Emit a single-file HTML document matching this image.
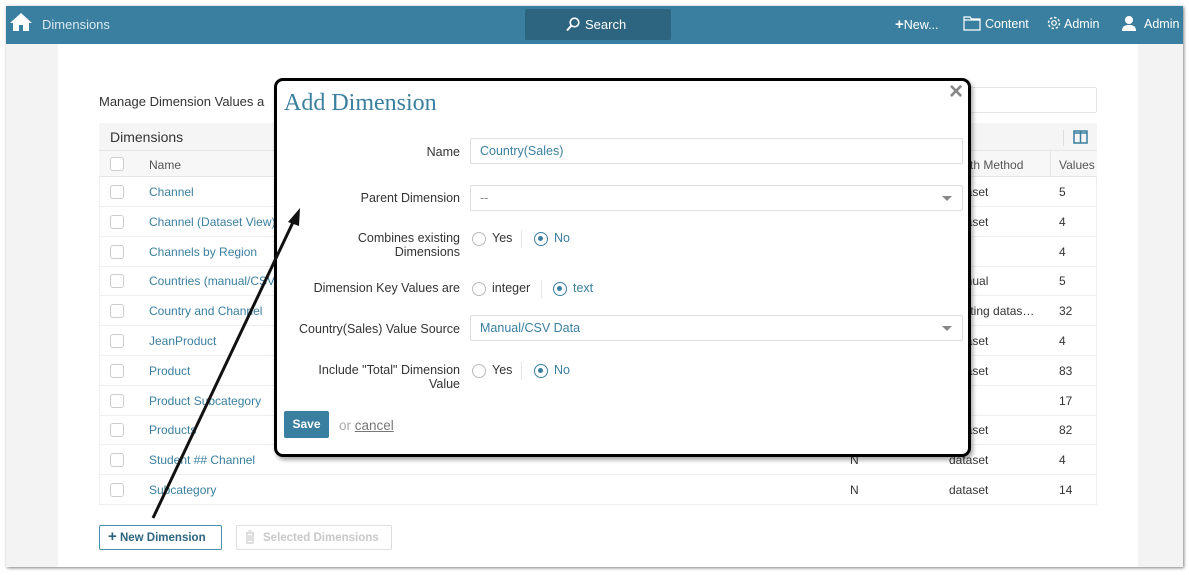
<!DOCTYPE html>
<html><head><meta charset="utf-8"><style>
*{box-sizing:border-box;margin:0;padding:0}
body{width:1189px;height:575px;background:#fff;font-family:"Liberation Sans",sans-serif;font-size:12px;color:#333;position:relative;overflow:hidden}
.a{position:absolute}
.frame{left:6px;top:6px;width:1177px;height:561px;background:#f3f3f3;box-shadow:1px 1px 3px rgba(0,0,0,.5);overflow:hidden}
.hdr{left:0;top:0;width:1177px;height:38px;background:#3a7f9f;color:#fff}
.panel{left:52px;top:38px;width:1080px;height:523px;background:#fff}
.row{left:93px;width:998px;height:30px;border-bottom:1px solid #eceeef}
.cb{width:14px;height:14px;border:1px solid #ccc;border-radius:3px;background:#fff}
.lnk{color:#3a7f9f}
.modal{left:274px;top:78px;width:697px;height:379px;background:#fff;border:3px solid #000;border-radius:9px;box-shadow:2px 3px 4px rgba(0,0,0,.35)}
.lbl{text-align:right;width:183px;left:0;color:#333;font-size:12.5px;line-height:14px}
.inp{left:193px;width:493px;height:26px;border:1px solid #ddd;border-radius:2px;color:#3a7f9f;font-size:12.5px;padding:5px 9px}
.rad{width:14px;height:14px;border:1px solid #bbb;border-radius:50%}
.rs{border:1.5px solid #3a7f9f}
.rs:after{content:"";position:absolute;left:3px;top:3px;width:5px;height:5px;border-radius:50%;background:#3a7f9f}
.caret{right:10px;top:10px;width:0;height:0;border-left:5px solid transparent;border-right:5px solid transparent;border-top:5px solid #888}
</style></head><body>
<div class="a frame">
 <div class="a hdr">
  <svg class="a" style="left:4px;top:6px" width="22" height="20" viewBox="0 0 22 20"><path d="M11 1L0 11h3v8h6v-6h4v6h6v-8h3z" fill="#fff"/></svg>
  <div class="a" style="left:36px;top:11px;font-size:13px;color:#dbe9f0">Dimensions</div>
  <div class="a" style="left:519px;top:3px;width:146px;height:31px;background:#2d6480;border-radius:2px"></div>
  <svg class="a" style="left:560px;top:11px" width="14" height="15" viewBox="0 0 14 15"><circle cx="8.5" cy="5.5" r="4.3" fill="none" stroke="#fff" stroke-width="1.6"/><path d="M5.5 8.5L1 13.5" stroke="#fff" stroke-width="2"/></svg>
  <div class="a" style="left:579px;top:11px;font-size:13px">Search</div>
  <div class="a" style="left:889px;top:10px;font-size:12.5px"><b style="font-size:15px">+</b>New...</div>
  <svg class="a" style="left:957px;top:10px" width="18" height="15" viewBox="0 0 18 15"><path d="M1 1h6l1.5 2H17v11H1z M1 4h16" fill="none" stroke="#fff" stroke-width="1.2"/></svg>
  <div class="a" style="left:979px;top:11px;font-size:12.5px">Content</div>
  <svg class="a" style="left:1040px;top:9px" width="16" height="16" viewBox="0 0 16 16"><circle cx="8" cy="8" r="5.5" fill="none" stroke="#fff" stroke-width="1.4" stroke-dasharray="2.5 1.8"/><circle cx="8" cy="8" r="2.3" fill="none" stroke="#fff" stroke-width="1.2"/></svg>
  <div class="a" style="left:1058px;top:11px;font-size:12.5px">Admin</div>
  <svg class="a" style="left:1115px;top:9px" width="16" height="16" viewBox="0 0 16 16"><circle cx="8" cy="5" r="4" fill="#fff"/><path d="M1 16c0-5 3-6 7-6s7 1 7 6z" fill="#fff"/></svg>
  <div class="a" style="left:1138px;top:11px;font-size:12.5px">Admin</div>
 </div>
 <div class="a panel"></div>
 <div class="a" style="left:93px;top:88px;font-size:13px;color:#333">Manage Dimension Values a</div>
 <div class="a" style="left:960px;top:81px;width:131px;height:26px;border:1px solid #e5e5e5;border-radius:2px"></div>
 <div class="a" style="left:93px;top:117px;width:998px;height:382px;border:1px solid #eceeef"></div>
 <div class="a" style="left:93px;top:117px;width:998px;height:28px;background:#f5f5f5;border-bottom:1px solid #e5e5e5"></div>
 <div class="a" style="left:104px;top:123px;font-size:14px">Dimensions</div>
 <div class="a" style="left:1057px;top:124px;width:1px;height:16px;background:#ddd"></div>
 <svg class="a" style="left:1067px;top:124px" width="15" height="14" viewBox="0 0 15 14"><rect x="1" y="1" width="13" height="12" fill="none" stroke="#3a7f9f" stroke-width="1.5"/><path d="M7.5 1v12M1 3h13" stroke="#3a7f9f" stroke-width="1.5"/></svg>
 <div class="a" style="left:93px;top:145px;width:998px;height:26px;background:#f7f7f7;border-bottom:1px solid #e5e5e5"></div>
 <div class="a cb" style="left:104px;top:151px"></div>
 <div class="a" style="left:143px;top:152px;color:#555">Name</div>
 <div class="a" style="left:964px;top:152px;color:#555">th Method</div>
 <div class="a" style="left:1044px;top:145px;width:1px;height:26px;background:#e5e5e5"></div>
 <div class="a" style="left:1053px;top:152px;color:#555">Values</div>
 <div id="rows"></div>
 <div class="a" style="left:93px;top:519px;width:123px;height:25px;border:1px solid #4a8fae;border-radius:2px;color:#2d6480;font-weight:bold;font-size:11.5px;padding:5px 0 0 8px"><span style="font-size:15px;line-height:11px">+</span> New Dimension</div>
 <div class="a" style="left:230px;top:519px;width:156px;height:25px;border:1px solid #ddd;border-radius:2px;color:#c8c8c8;font-weight:bold;font-size:11.5px;padding:6px 0 0 26px">Selected Dimensions</div>
 <svg class="a" style="left:239px;top:524px" width="10" height="14" viewBox="0 0 10 14"><path d="M1 3h8M3.5 1h3M2 3v10h6V3M4 5v6M6 5v6" fill="none" stroke="#ccc" stroke-width="1.2"/></svg>
</div>
<div class="a modal">
 <div class="a" style="left:7px;top:9px;font-family:'Liberation Serif',serif;font-size:24px;color:#3a7f9f">Add Dimension</div>
 <div class="a" style="left:672px;top:-3px;font-size:24px;color:#888;font-weight:bold">×</div>
 <div class="a lbl" style="top:64px">Name</div>
 <div class="a inp" style="top:57px">Country(Sales)</div>
 <div class="a lbl" style="top:110px">Parent Dimension</div>
 <div class="a inp" style="top:104px;color:#888">--<div class="a caret"></div></div>
 <div class="a lbl" style="top:150px">Combines existing<br>Dimensions</div>
 <div class="a rad" style="left:195px;top:151px"></div><div class="a" style="left:215px;top:150px;font-size:12.5px">Yes</div>
 <div class="a" style="left:244px;top:149px;width:1px;height:18px;background:#e5e5e5"></div>
 <div class="a rad rs" style="left:257px;top:151px"></div><div class="a lnk" style="left:277px;top:150px;font-size:12.5px">No</div>
 <div class="a lbl" style="top:200px">Dimension Key Values are</div>
 <div class="a rad" style="left:195px;top:201px"></div><div class="a" style="left:215px;top:200px;font-size:12.5px">integer</div>
 <div class="a" style="left:264px;top:199px;width:1px;height:18px;background:#e5e5e5"></div>
 <div class="a rad rs" style="left:276px;top:201px"></div><div class="a lnk" style="left:296px;top:200px;font-size:12.5px">text</div>
 <div class="a lbl" style="top:241px">Country(Sales) Value Source</div>
 <div class="a inp" style="top:234px">Manual/CSV Data<div class="a caret"></div></div>
 <div class="a lbl" style="top:282px">Include "Total" Dimension<br>Value</div>
 <div class="a rad" style="left:195px;top:283px"></div><div class="a" style="left:215px;top:282px;font-size:12.5px">Yes</div>
 <div class="a" style="left:244px;top:281px;width:1px;height:18px;background:#e5e5e5"></div>
 <div class="a rad rs" style="left:257px;top:283px"></div><div class="a lnk" style="left:277px;top:282px;font-size:12.5px">No</div>
 <div class="a" style="left:7px;top:330px;width:45px;height:27px;background:#3a7f9f;border-radius:2px;color:#fff;font-weight:bold;font-size:12px;text-align:center;line-height:27px">Save</div>
 <div class="a" style="left:62px;top:337px;font-size:13.5px;color:#aaa">or <span style="color:#777;text-decoration:underline">cancel</span></div>
</div>
<svg class="a" style="left:0;top:0" width="1189" height="575"><path d="M153 518L295 218" stroke="#111" stroke-width="3"/><path d="M300 208L288 222L299 226Z" fill="#111"/></svg>
<script>
var r=[["Channel","","dataset","5"],["Channel (Dataset View)","","dataset","4"],["Channels by Region","","","4"],["Countries (manual/CSV)","","manual","5"],["Country and Channel","","existing datas…","32"],["JeanProduct","","dataset","4"],["Product","","dataset","83"],["Product Subcategory","","","17"],["Products","","dataset","82"],["Student ## Channel","N","dataset","4"],["Subcategory","N","dataset","14"]];
var h="";r.forEach(function(x,i){var t=171+i*29.8;h+='<div class="a row" style="top:'+t+'px"><div class="a cb" style="left:11px;top:8px"></div><div class="a lnk" style="left:50px;top:8px">'+x[0]+'</div><div class="a" style="left:751px;top:8px">'+x[1]+'</div><div class="a" style="left:850px;top:8px">'+x[2]+'</div><div class="a" style="left:960px;top:8px">'+x[3]+'</div></div>';});
document.getElementById("rows").outerHTML=h;
</script>
</body></html>
